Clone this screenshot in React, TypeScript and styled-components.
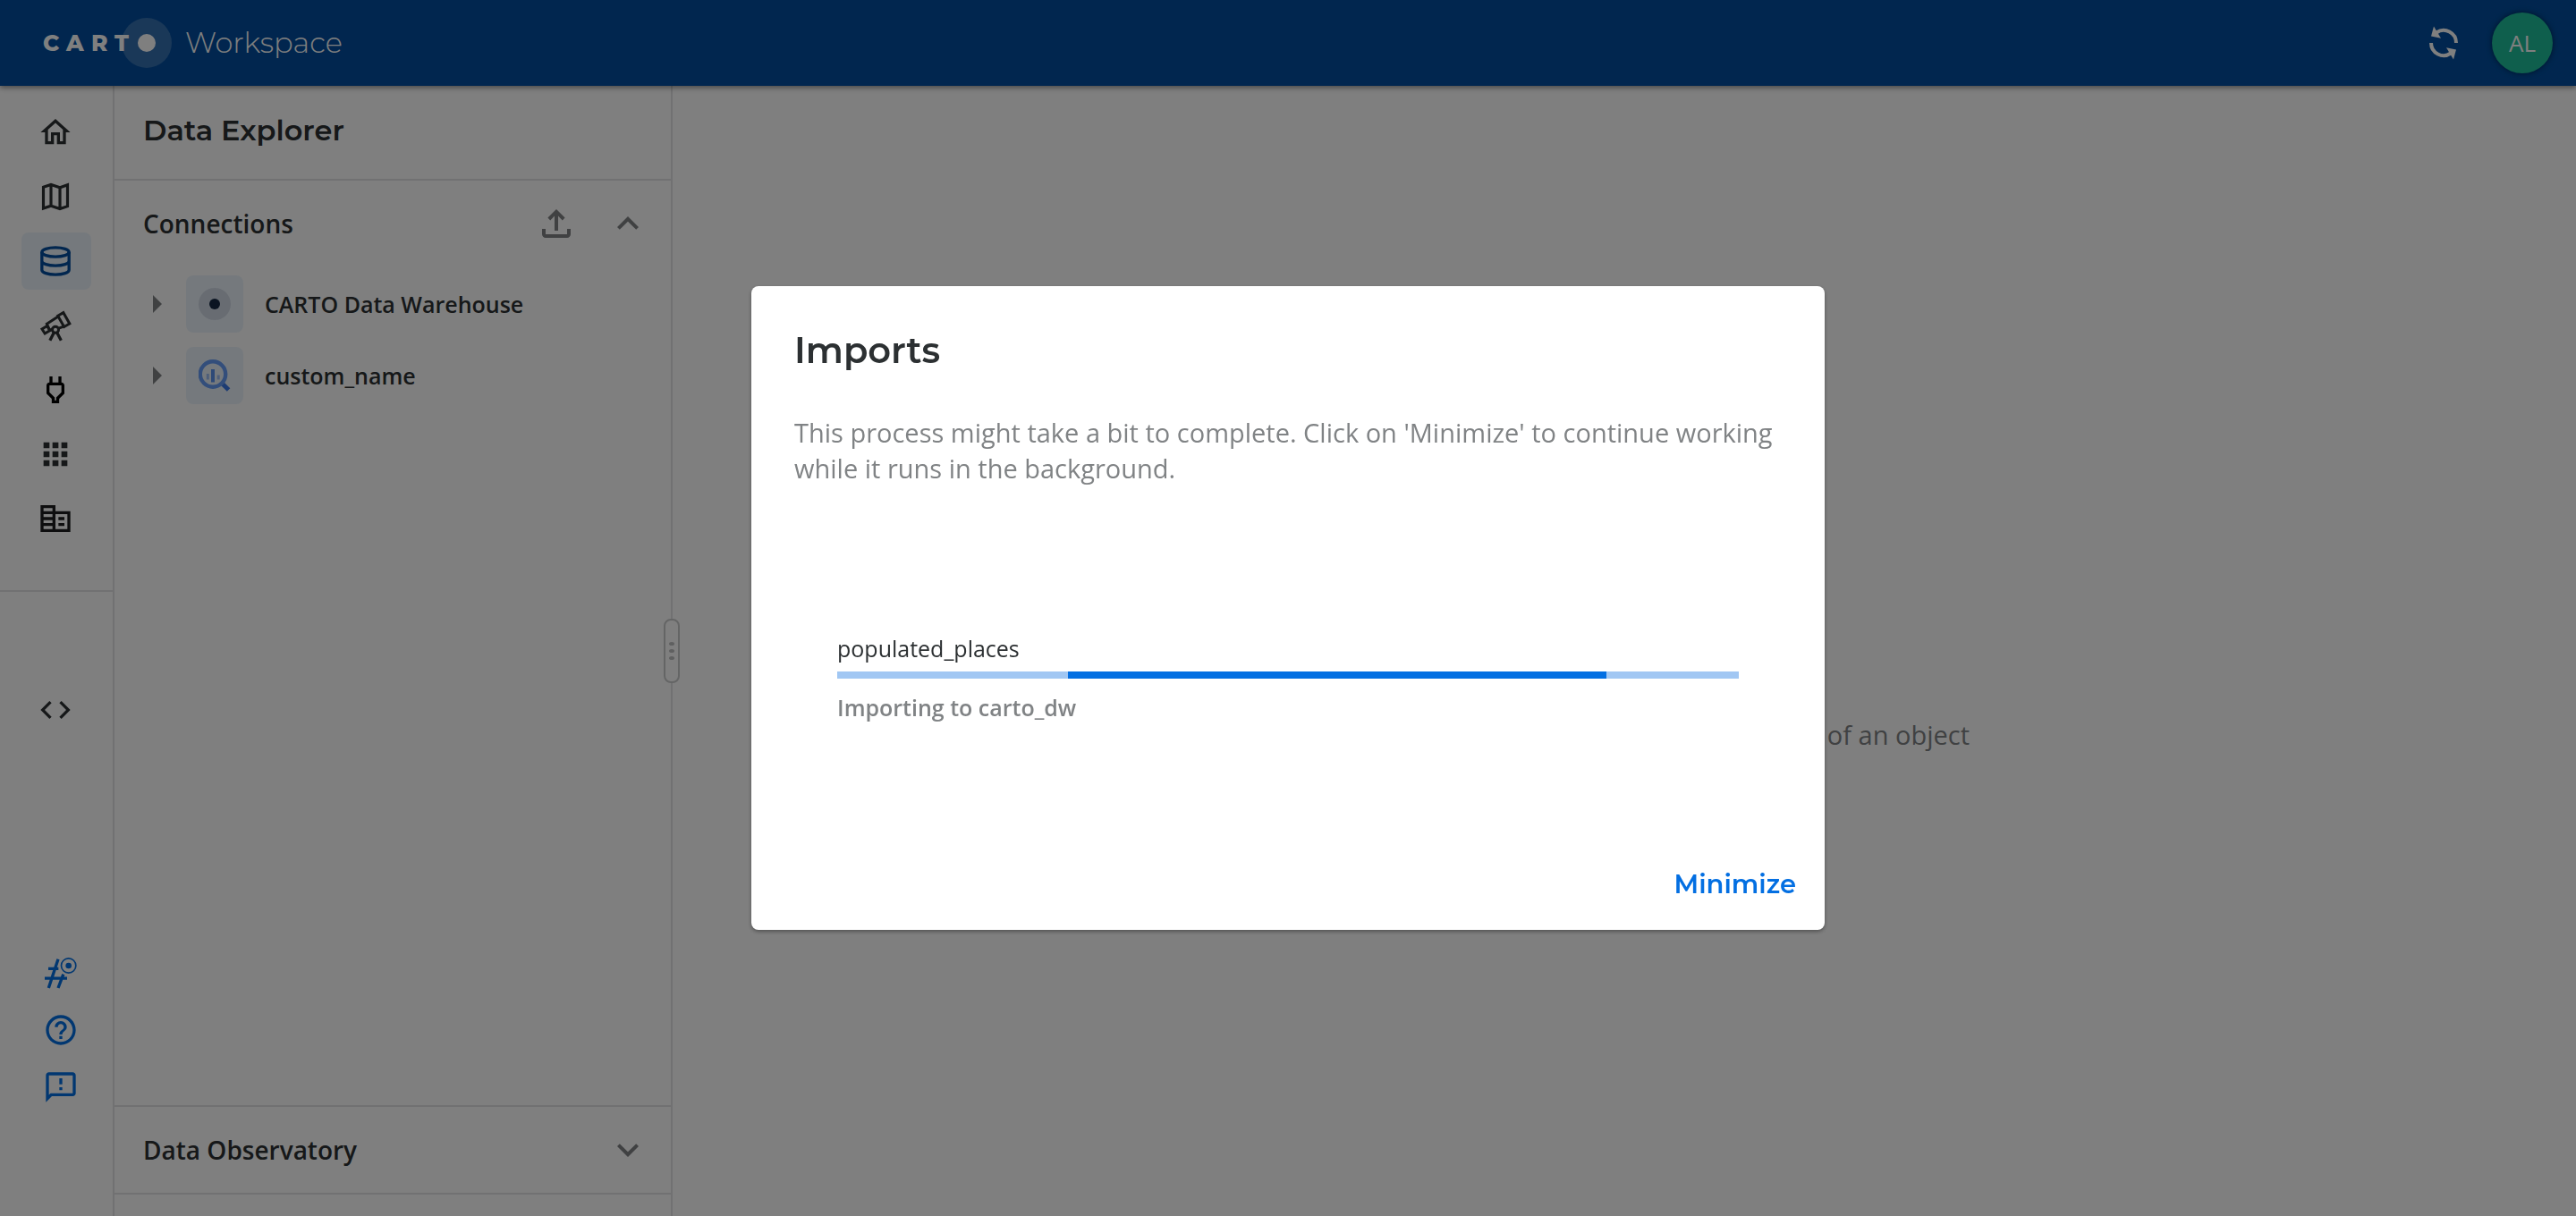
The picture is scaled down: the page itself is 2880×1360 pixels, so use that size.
import React from "react";
import styled, { createGlobalStyle, css } from "styled-components";

const display = `Montserrat, Inter, "Open Sans", sans-serif`;
const body = `"Open Sans", "Noto Sans", sans-serif`;

const color = {
  ink: "#2c3032",
  muted: "#808385",
  line: "#e2e3e4",
  handle: "#c9cacb",
  primary: "#036fe2",
  primaryLight: "#a1c7f3",
  navy: "#024d9e",
  tile: "#ebf3fb",
};

const GlobalStyle = createGlobalStyle`
  *, *::before, *::after { box-sizing: border-box; }
  body { margin: 0; background: #fff; color: ${color.ink}; font-family: ${body}; }
  h1, h2, p, ul { margin: 0; padding: 0; }
  ul { list-style: none; }
  button { font: inherit; color: inherit; border: 0; padding: 0; background: none; cursor: pointer; }
`;

/* ---------- Shell ---------- */

const Page = styled.div`
  display: flex;
  flex-direction: column;
  min-height: 100vh;
`;

const TopBar = styled.header`
  display: flex;
  align-items: center;
  justify-content: space-between;
  height: 96px;
  padding: 0 26px 0 48px;
  background: ${color.navy};
  color: #fff;
  box-shadow: 0 2px 6px rgba(0, 0, 0, 0.45);
  z-index: 1;
`;

const Brand = styled.a`
  display: flex;
  align-items: center;
  gap: 13px;
  color: inherit;
  text-decoration: none;
  font-family: ${display};
  font-size: 32px;
  font-weight: 300;
  line-height: 48px;
`;

const TopActions = styled.div`
  display: flex;
  align-items: center;
  gap: 34px;
`;

const IconButton = styled.button`
  display: flex;
`;

const Avatar = styled.button`
  width: 68px;
  height: 68px;
  border-radius: 50%;
  background: #1ebe9b;
  color: #fff;
  font-size: 26px;
  box-shadow: 0 0 6px rgba(0, 0, 0, 0.5);
`;

const Columns = styled.div`
  display: flex;
  flex: 1;
`;

/* ---------- Navigation rail ---------- */

const Rail = styled.nav`
  display: flex;
  flex-direction: column;
  width: 128px;
  border-right: 2px solid ${color.line};
`;

const RailGroup = styled.ul`
  display: flex;
  flex-direction: column;
  gap: 8px;
  padding: 20px 24px 48px;
  border-bottom: 2px solid ${color.line};
`;

const RailLink = styled.a<{ $active?: boolean }>`
  display: flex;
  align-items: center;
  justify-content: center;
  width: 78px;
  height: 64px;
  padding-right: 2px;
  border-radius: 8px;
  color: ${color.ink};
  ${(p) => p.$active && css`background: ${color.tile}; color: ${color.navy};`}
`;

const RailMiddle = styled.div`
  flex: 1;
  padding: 100px 24px 0;
`;

const RailFooter = styled.ul`
  display: flex;
  flex-direction: column;
  align-items: center;
  gap: 24px;
  padding: 0 0 124px 10px;
  color: ${color.primary};
`;

const FooterLink = styled.a`
  display: flex;
  color: inherit;
`;

/* ---------- Explorer panel ---------- */

const Panel = styled.aside`
  position: relative;
  display: flex;
  flex-direction: column;
  width: 624px;
  border-right: 2px solid ${color.line};
`;

const PanelTitle = styled.h1`
  padding: 26px 32px 30px;
  border-bottom: 2px solid ${color.line};
  font-family: ${display};
  font-size: 32px;
  font-weight: 600;
  line-height: 48px;
`;

const Section = styled.section<{ $grow?: boolean }>`
  flex: ${(p) => (p.$grow ? 1 : "none")};
  border-bottom: 2px solid ${color.line};
`;

const SectionHead = styled.div`
  display: flex;
  align-items: center;
  gap: 32px;
  height: 96px;
  padding: 0 24px 0 32px;
  color: ${color.muted};
`;

const SectionTitle = styled.h2`
  flex: 1;
  color: ${color.ink};
  font-size: 28px;
  font-weight: 600;
  line-height: 40px;
`;

const PanelEnd = styled.div`
  height: 24px;
`;

const Tree = styled.ul`
  display: flex;
  flex-direction: column;
  gap: 16px;
  padding: 10px 24px;
`;

const TreeRow = styled.li`
  display: flex;
  align-items: center;
  gap: 8px;
  color: ${color.muted};
`;

const Tile = styled.span`
  display: flex;
  align-items: center;
  justify-content: center;
  width: 64px;
  height: 64px;
  border-radius: 8px;
  background: ${color.tile};
`;

const TreeLabel = styled.span`
  padding-left: 16px;
  color: ${color.ink};
  font-size: 25px;
  font-weight: 600;
  line-height: 32px;
`;

const ResizeHandle = styled.button`
  position: absolute;
  top: calc(50% - 36px);
  right: -10px;
  display: flex;
  flex-direction: column;
  align-items: center;
  justify-content: center;
  gap: 4px;
  width: 18px;
  height: 72px;
  border: 2px solid ${color.handle};
  border-radius: 8px;
  background: #fff;
`;

const Dot = styled.i`
  width: 6px;
  height: 4px;
  border-radius: 50%;
  background: #bfc0c1;
`;

/* ---------- Main area ---------- */

const Main = styled.main`
  display: flex;
  align-items: center;
  justify-content: center;
  flex: 1;
  padding-top: 188px;
`;

const EmptyHint = styled.p`
  width: 772px;
  color: ${color.muted};
  font-size: 29px;
  line-height: 40px;
  text-align: right;
`;

/* ---------- Dialog ---------- */

const Backdrop = styled.div`
  position: fixed;
  inset: 0;
  z-index: 2;
  display: flex;
  align-items: center;
  justify-content: center;
  background: rgba(0, 0, 0, 0.5);
`;

const Dialog = styled.div`
  display: flex;
  flex-direction: column;
  width: 1200px;
  min-height: 720px;
  border-radius: 8px;
  background: #fff;
  box-shadow: 0 2px 4px rgba(0, 0, 0, 0.35);
`;

const DialogTitle = styled.h2`
  padding: 40px 48px;
  font-family: ${display};
  font-size: 40px;
  font-weight: 600;
  line-height: 64px;
`;

const DialogText = styled.p`
  padding: 0 48px;
  color: ${color.muted};
  font-size: 29px;
  line-height: 40px;
`;

const Job = styled.div`
  display: flex;
  flex-direction: column;
  justify-content: center;
  flex: 1;
  padding: 32px 96px 0;
`;

const JobName = styled.p`
  font-size: 25px;
  line-height: 32px;
`;

const JobStatus = styled.p`
  color: ${color.muted};
  font-size: 25px;
  font-weight: 600;
  line-height: 32px;
`;

const Track = styled.div`
  height: 8px;
  margin: 10px 0 16px;
  background: ${color.primaryLight};
`;

const Fill = styled.div`
  height: 100%;
  background: ${color.primary};
`;

const DialogActions = styled.div`
  display: flex;
  justify-content: flex-end;
  padding: 16px 16px 20px;
`;

const TextButton = styled.button`
  height: 64px;
  padding: 0 16px;
  color: ${color.primary};
  font-family: ${display};
  font-size: 29px;
  font-weight: 600;
`;

/* ---------- Icons ---------- */

const Svg = ({ size = 40, children }: { size?: number; children: React.ReactNode }) => (
  <svg width={size} height={size} viewBox="0 0 24 24" fill="currentColor" aria-hidden="true">
    {children}
  </svg>
);

const Home = () => (
  <Svg><path d="M12 5.69l5 4.5V18h-2v-6H9v6H7v-7.81l5-4.5M12 3L2 12h3v8h6v-6h2v6h6v-8h3L12 3z" /></Svg>
);
const MapIcon = () => (
  <Svg>
    <path d="M3.9 5.6 9 3.9l6 2 5.1-1.8v14.3L15 20.1l-6-2-5.1 1.7zM9 4v14M15 6v14" fill="none" stroke="currentColor" strokeWidth="1.9" />
  </Svg>
);
const Database = () => (
  <Svg>
    <g fill="none" stroke="currentColor" strokeWidth="2">
      <ellipse cx="12" cy="6" rx="9.1" ry="3.1" />
      <path d="M2.9 6v12c0 1.7 4 3.1 9.1 3.1s9.1-1.4 9.1-3.1V6M2.9 12c0 1.7 4 3.1 9.1 3.1s9.1-1.4 9.1-3.1" />
    </g>
  </Svg>
);
const Telescope = () => (
  <Svg>
    <g fill="none" stroke="currentColor" strokeWidth="1.8">
      <path d="M13.6 5.6 17.3 3.4 21.5 10.8 17.8 12.9z" />
      <path d="M13.8 6 6.2 11l2 4.2 2-.9M14.2 13.9l3.8-1.4" />
      <path d="M6.4 12.3 3 14.4l1.9 3 3.3-2z" />
      <circle cx="12" cy="14.8" r="2.1" />
      <path d="M11 16.8 8.3 22M13 16.8 15.8 22" strokeWidth="2" />
    </g>
  </Svg>
);
const Plug = () => (
  <Svg>
    <path fill="#000" d="M16 9v4.66l-3.5 3.51V19h-1v-1.83L8 13.65V9h8m0-6h-2v4h-4V3H8v4h-.01C6.9 6.99 6 7.89 6 8.99v5.52L9.5 18v3h5v-3l3.5-3.51V9c0-1.1-.9-2-2-2V3z" />
  </Svg>
);
const Apps = () => (
  <Svg><path d="M4 8h4V4H4v4zm6 12h4v-4h-4v4zm-6 0h4v-4H4v4zm0-6h4v-4H4v4zm6 0h4v-4h-4v4zm6-10v4h4V4h-4zm-6 4h4V4h-4v4zm6 6h4v-4h-4v4zm0 6h4v-4h-4v4z" /></Svg>
);
const Company = () => (
  <Svg><path fill="#1c1d1e" d="M12 7V3H2v18h20V7H12zm-2 12H4v-2h6v2zm0-4H4v-2h6v2zm0-4H4V9h6v2zm0-4H4V5h6v2zm10 12h-8V9h8v10zm-2-8h-4v2h4v-2zm0 4h-4v2h4v-2z" /></Svg>
);
const Code = () => (
  <Svg><path d="M9.4 16.6L4.8 12l4.6-4.6L8 6l-6 6 6 6 1.4-1.4zm5.2 0l4.6-4.6-4.6-4.6L16 6l6 6-6 6-1.4-1.4z" /></Svg>
);
const HashDot = () => (
  <Svg>
    <g fill="none" stroke="currentColor" strokeWidth="2">
      <path d="M3.6 9.2h6.8M1.2 15.7h15M10.2 2.8 3.8 22.2M13.7 13 10.2 22.2" />
      <circle cx="17.2" cy="7.2" r="4.9" strokeWidth="1" />
    </g>
    <circle cx="17.2" cy="7.2" r="2" />
  </Svg>
);
const Help = () => (
  <Svg><path d="M11 18h2v-2h-2v2zm1-16C6.48 2 2 6.48 2 12s4.48 10 10 10 10-4.48 10-10S17.52 2 12 2zm0 18c-4.41 0-8-3.59-8-8s3.59-8 8-8 8 3.59 8 8-3.59 8-8 8zm0-14c-2.21 0-4 1.79-4 4h2c0-1.1.9-2 2-2s2 .9 2 2c0 2-3 1.75-3 5h2c0-2.25 3-2.5 3-5 0-2.21-1.79-4-4-4z" /></Svg>
);
const Feedback = () => (
  <Svg><path d="M20 2H4c-1.1 0-1.99.9-1.99 2L2 22l4-4h14c1.1 0 2-.9 2-2V4c0-1.1-.9-2-2-2zm0 14H5.17L4 17.17V4h16v12zm-9-4h2v2h-2zm0-6h2v4h-2z" /></Svg>
);
const ChevronUp = () => (
  <Svg size={48}><path d="M12 8l-6 6 1.41 1.41L12 10.83l4.59 4.58L18 14z" /></Svg>
);
const ChevronDown = () => (
  <Svg size={48}><path d="M16.59 8.59L12 13.17 7.41 8.59 6 10l6 6 6-6z" /></Svg>
);
const Upload = () => (
  <Svg size={48}>
    <path d="M12 4 7.2 8.8l1.4 1.4L11 7.8V16h2V7.8l2.4 2.4 1.4-1.4z" />
    <path d="M4 15v3c0 1.1.9 2 2 2h12c1.1 0 2-.9 2-2v-3h-2v3H6v-3z" />
  </Svg>
);
const Caret = () => (
  <Svg size={48}><path d="M9.5 17l5-5-5-5v10z" /></Svg>
);
const Sync = () => (
  <svg width="40" height="40" viewBox="-20 -20 40 40" aria-hidden="true">
    {[0, 180].map((turn) => (
      <g key={turn} transform={`rotate(${turn})`}>
        <path d="M14 0A14 14 0 0 0-8-11.5" fill="none" stroke="#fff" strokeWidth="4" />
        <path d="M-11-18.5-14-7.5-3-5.3z" fill="#fff" />
      </g>
    ))}
  </svg>
);
const CartoMark = () => (
  <svg width="36" height="36" viewBox="0 0 36 36" aria-hidden="true">
    <circle cx="18" cy="18" r="18" fill="#1b1f4b" fillOpacity="0.12" />
    <circle cx="18" cy="18" r="6" fill="#162945" />
  </svg>
);
const BigQuery = () => (
  <svg width="36" height="36" viewBox="0 0 36 36" fill="none" aria-hidden="true">
    <path d="M27 27.5 33.6 34" stroke="#3b78e7" strokeWidth="5" />
    <circle cx="16" cy="16.5" r="14.2" stroke="#669df6" strokeWidth="4.4" />
    <path d="M16 11v14.5" stroke="#5b93ee" strokeWidth="4" />
    <path d="M10.3 16v6.5M22.2 17.5v5" stroke="#9dbdf3" strokeWidth="3" />
  </svg>
);
const CartoLogo = () => (
  <svg width="146" height="56" viewBox="0 0 146 56" fill="#fff" role="img" aria-label="CARTO">
    <circle cx="116" cy="28" r="28" fillOpacity="0.2" />
    <circle cx="116" cy="28" r="10" />
    <text x="0 26 54 80" y="37" fontFamily={display} fontSize="25" fontWeight="800">CART</text>
  </svg>
);

const navItems = [
  { label: "Home", icon: <Home /> },
  { label: "Maps", icon: <MapIcon /> },
  { label: "Data Explorer", icon: <Database />, active: true },
  { label: "Data Observatory", icon: <Telescope /> },
  { label: "Connections", icon: <Plug /> },
  { label: "Applications", icon: <Apps /> },
  { label: "Organization", icon: <Company /> },
];

const footerItems = [
  { label: "Community", icon: <HashDot /> },
  { label: "Help", icon: <Help /> },
  { label: "Feedback", icon: <Feedback /> },
];

const connections = [
  { name: "CARTO Data Warehouse", icon: <CartoMark /> },
  { name: "custom_name", icon: <BigQuery /> },
];

const job = { name: "populated_places", target: "carto_dw", from: 0.256, to: 0.853 };

const percent = (value: number) => `${value * 100}%`;

export default function App() {
  return (
    <Page>
      <GlobalStyle />
      <TopBar>
        <Brand href="#">
          <CartoLogo />
          Workspace
        </Brand>
        <TopActions>
          <IconButton aria-label="Refresh"><Sync /></IconButton>
          <Avatar>AL</Avatar>
        </TopActions>
      </TopBar>

      <Columns>
        <Rail>
          <RailGroup>
            {navItems.map((item) => (
              <li key={item.label}>
                <RailLink href="#" aria-label={item.label} $active={item.active}>{item.icon}</RailLink>
              </li>
            ))}
          </RailGroup>
          <RailMiddle>
            <RailLink href="#" aria-label="Developers"><Code /></RailLink>
          </RailMiddle>
          <RailFooter>
            {footerItems.map((item) => (
              <li key={item.label}>
                <FooterLink href="#" aria-label={item.label}>{item.icon}</FooterLink>
              </li>
            ))}
          </RailFooter>
        </Rail>

        <Panel>
          <PanelTitle>Data Explorer</PanelTitle>
          <Section $grow>
            <SectionHead>
              <SectionTitle>Connections</SectionTitle>
              <IconButton aria-label="Import data"><Upload /></IconButton>
              <IconButton aria-label="Collapse connections"><ChevronUp /></IconButton>
            </SectionHead>
            <Tree>
              {connections.map((connection) => (
                <TreeRow key={connection.name}>
                  <IconButton aria-label={`Expand ${connection.name}`}><Caret /></IconButton>
                  <Tile>{connection.icon}</Tile>
                  <TreeLabel>{connection.name}</TreeLabel>
                </TreeRow>
              ))}
            </Tree>
          </Section>
          <Section>
            <SectionHead>
              <SectionTitle>Data Observatory</SectionTitle>
              <IconButton aria-label="Expand Data Observatory"><ChevronDown /></IconButton>
            </SectionHead>
          </Section>
          <PanelEnd />
          <ResizeHandle aria-label="Resize panel"><Dot /><Dot /><Dot /></ResizeHandle>
        </Panel>

        <Main>
          <EmptyHint>of an object</EmptyHint>
        </Main>
      </Columns>

      <Backdrop>
        <Dialog role="dialog" aria-modal="true" aria-labelledby="imports-title">
          <DialogTitle id="imports-title">Imports</DialogTitle>
          <DialogText>
            This process might take a bit to complete. Click on 'Minimize' to continue working while it runs in the background.
          </DialogText>
          <Job>
            <JobName id="job-name">{job.name}</JobName>
            <Track role="progressbar" aria-labelledby="job-name">
              <Fill style={{ marginLeft: percent(job.from), width: percent(job.to - job.from) }} />
            </Track>
            <JobStatus>Importing to {job.target}</JobStatus>
          </Job>
          <DialogActions>
            <TextButton>Minimize</TextButton>
          </DialogActions>
        </Dialog>
      </Backdrop>
    </Page>
  );
}
